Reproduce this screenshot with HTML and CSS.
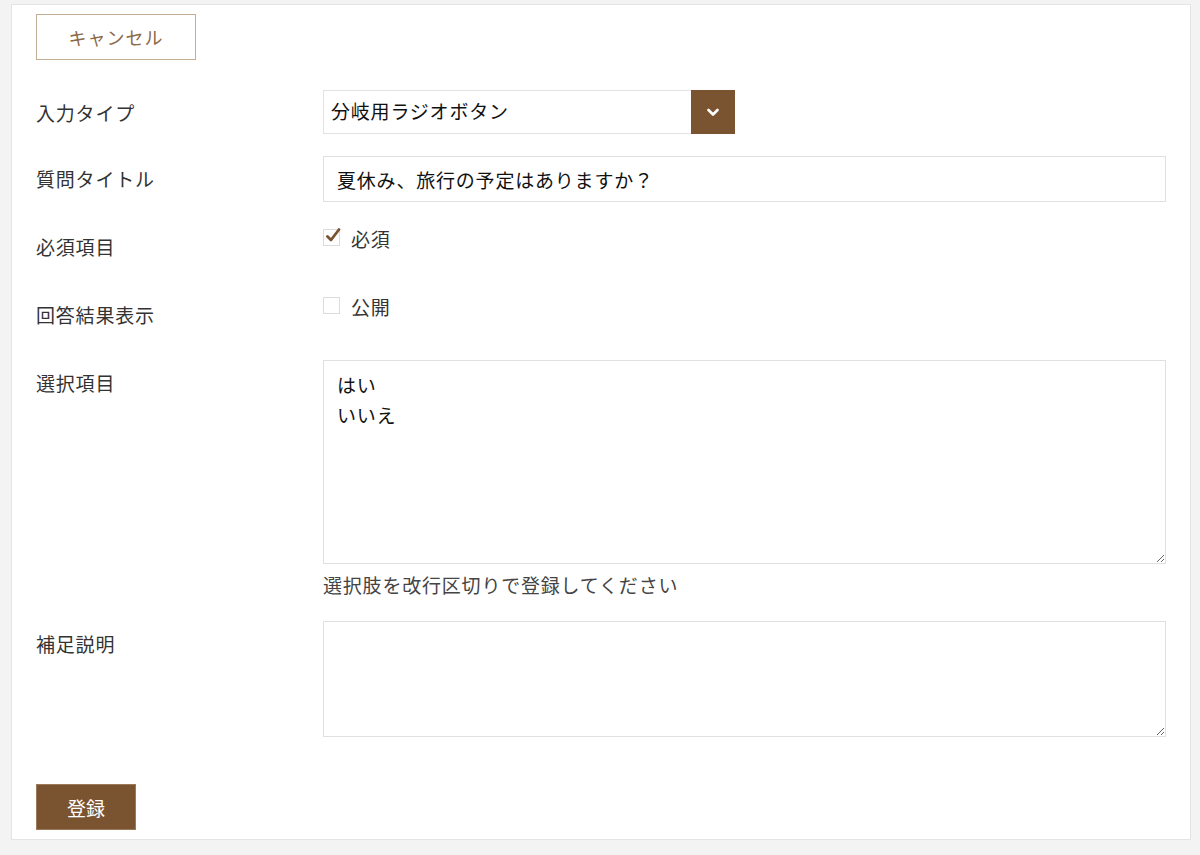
FILE: index.html
```html
<!DOCTYPE html>
<html lang="ja">

<head>
  <meta charset="UTF-8">
  <meta name="viewport" content="width=device-width, initial-scale=1.0">
  <title>質問編集</title>
  <link rel="stylesheet" href="styles.css">
</head>

<body>

  <div class="panel">
    <button class="btn-cancel">キャンセル</button>

    <form class="question-form">
      <div class="row row-select">
        <label class="row-label">入力タイプ</label>
        <div class="select-box">
          <span class="select-value">分岐用ラジオボタン</span>
          <span class="select-arrow">
            <svg width="12" height="9" viewBox="0 0 12 9"><path d="M1.5 2 L6 6.5 L10.5 2" fill="none" stroke="#fff" stroke-width="2.6" stroke-linecap="round" stroke-linejoin="round"/></svg>
          </span>
        </div>
      </div>

      <div class="row">
        <label class="row-label">質問タイトル</label>
        <input class="text-input" type="text" value="夏休み、旅行の予定はありますか？">
      </div>

      <div class="row">
        <label class="row-label">必須項目</label>
        <label class="check">
          <span class="check-box">
            <svg class="check-mark" width="16" height="16" viewBox="0 0 16 16"><path d="M2.5 8.5 L6 12 L14 1.5" fill="none" stroke="#7a5330" stroke-width="2.8" stroke-linecap="round" stroke-linejoin="round"/></svg>
          </span>
          必須
        </label>
      </div>

      <div class="row">
        <label class="row-label">回答結果表示</label>
        <label class="check">
          <span class="check-box"></span>
          公開
        </label>
      </div>

      <div class="row">
        <label class="row-label">選択項目</label>
        <div>
          <textarea class="text-area tall">はい
いいえ</textarea>
          <p class="help">選択肢を改行区切りで登録してください</p>
        </div>
      </div>

      <div class="row">
        <label class="row-label">補足説明</label>
        <textarea class="text-area short"></textarea>
      </div>

      <button class="btn-submit" type="button">登録</button>
    </form>
  </div>

</body>

</html>
```

FILE: styles.css
```css
body {
  margin: 0;
  padding: 4px 9px 15px 11px;
  background-color: #f3f3f3;
  font-family: "Noto Sans CJK JP", "Noto Sans", sans-serif;
  color: #333;
}

.panel {
  background-color: #fff;
  border: 1px solid #e4e4e4;
  padding: 9px 24px 9px 24px;
}

.btn-cancel {
  display: block;
  width: 160px;
  height: 46px;
  background: #fff;
  border: 1px solid #c3ad95;
  color: #8b6a49;
  font-family: inherit;
  font-size: 18px;
  letter-spacing: 1px;
  margin-bottom: 30px;
}

.row {
  display: grid;
  grid-template-columns: 287px 1fr;
  min-height: 46px;
  margin-bottom: 22px;
}

.row-select {
  min-height: 44px;
}

.row-label {
  font-size: 19px;
  letter-spacing: 0.8px;
  line-height: 28px;
  padding-top: 9px;
  color: #333;
}

.select-box {
  display: flex;
  width: 412px;
  height: 44px;
  box-sizing: border-box;
  border: 1px solid #e3e3e3;
}

.select-value {
  flex: 1;
  padding-left: 7px;
  font-size: 19px;
  letter-spacing: 0.8px;
  line-height: 40px;
  color: #111;
}

.select-arrow {
  width: 44px;
  margin: -1px -1px -1px 0;
  background-color: #7a5330;
  display: flex;
  align-items: center;
  justify-content: center;
}

.text-input {
  height: 46px;
  box-sizing: border-box;
  border: 1px solid #e0e0e0;
  padding: 0 13px;
  font-family: inherit;
  font-size: 19px;
  letter-spacing: 0.8px;
  color: #111;
  outline: none;
}

.check {
  display: flex;
  align-items: center;
  gap: 11px;
  height: 28px;
  font-size: 19px;
  letter-spacing: 0.8px;
  color: #333;
}

.check-box {
  position: relative;
  width: 15px;
  height: 15px;
  border: 1px solid #dcdcdc;
  background: #fff;
  margin-top: -2px;
}

.check-mark {
  position: absolute;
  left: 1px;
  top: -2px;
}

.text-area {
  display: block;
  width: 100%;
  box-sizing: border-box;
  border: 1px solid #e0e0e0;
  padding: 9px 13px;
  font-family: inherit;
  font-size: 19px;
  letter-spacing: 0.8px;
  line-height: 30px;
  color: #111;
  outline: none;
}

.tall {
  height: 204px;
}

.short {
  height: 116px;
}

.help {
  margin: 7px 0 0;
  font-size: 19px;
  letter-spacing: 0.8px;
  line-height: 28px;
  color: #444;
}

.btn-submit {
  display: block;
  width: 100px;
  height: 46px;
  margin-top: 47px;
  border: 1px solid #9b7a5b;
  background-color: #7a5330;
  color: #fff;
  font-family: inherit;
  font-size: 19px;
}
```
